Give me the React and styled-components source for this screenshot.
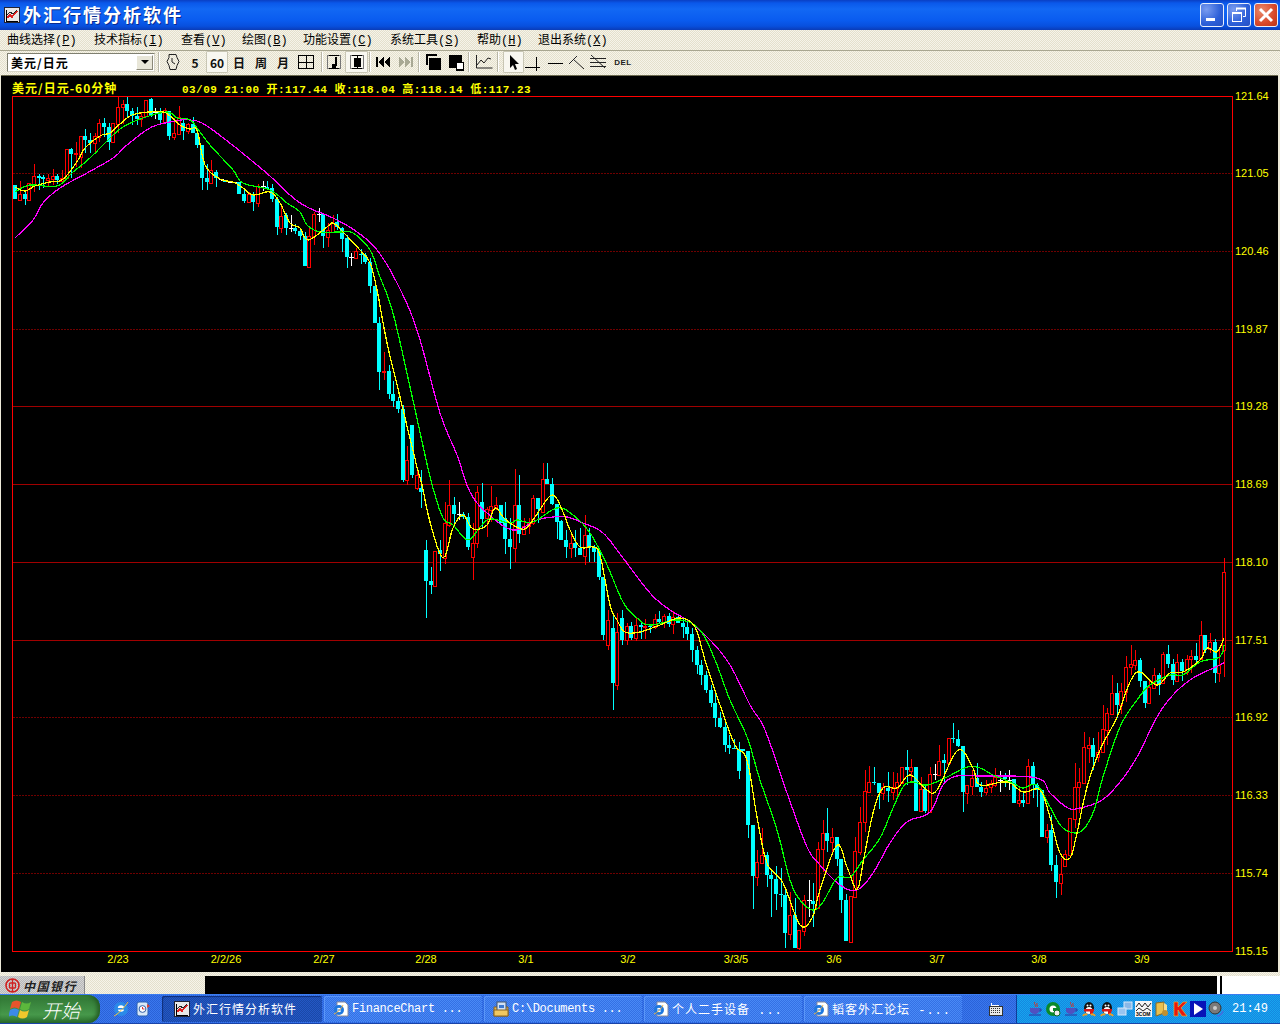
import React from 'react';
import styled, { createGlobalStyle } from 'styled-components';

const Global = createGlobalStyle`
  html, body { margin: 0; padding: 0; background: #ece9d8; overflow: hidden; }
  * { box-sizing: border-box; }
`;

const FONT = '"Liberation Mono", "Noto Sans CJK SC", monospace';
const dither = 'repeating-conic-gradient(#e4e0cc 0 25%, #f6f4ea 0 50%) 0 0 / 2px 2px';

const Page = styled.div`
  width: 1280px; height: 1024px; display: flex; flex-direction: column; font-family: ${FONT};
`;
const TitleBar = styled.header`
  height: 30px; display: flex; align-items: center; padding: 0 2px 0 4px; color: #fff;
  background: linear-gradient(#0a3fc4 0, #0a58ea 3px, #1268f4 9px, #0a5cf0 20px, #0850de 26px, #0a3cb8 30px);
`;
const TitleText = styled.h1`
  flex: 1; margin: 0 0 3px 3px; font: bold 18px "Noto Sans CJK SC", sans-serif; letter-spacing: 2px;
  text-shadow: 1px 1px 0 #0a2a90;
`;
const WinButton = styled.button`
  width: 24px; height: 24px; margin-left: 3px; padding: 0; display: flex; align-items: center; justify-content: center;
  border: 1px solid #e8eefc; border-radius: 3px;
  background: ${p => p.$close ? 'radial-gradient(circle at 30% 30%, #e88a6c, #d8482a 60%, #b83418)' : 'radial-gradient(circle at 25% 25%, #7a9cf0, #2c5fd8 60%, #2450c4)'};
`;
const MenuBar = styled.nav`
  height: 21px; display: flex; align-items: center; padding: 0 0 3px 7px; background: ${dither};
  border-bottom: 1px solid #a8a690; font-size: 12px; color: #000;
`;
const MenuItem = styled.span`
  width: ${p => p.$w}px; white-space: nowrap;
  u { text-decoration: underline; }
`;
const ToolBar = styled.div`
  height: 24px; display: flex; align-items: center; padding: 0 0 2px 7px; background: ${dither};
`;
const Select = styled.div`
  width: 148px; height: 19px; display: flex; align-items: center; justify-content: space-between; padding: 0 1px 0 3px;
  background: #fff; border: 1px solid #7f7f70; border-right-color: #d8d6c8; border-bottom-color: #d8d6c8;
  font: bold 12px "Noto Sans CJK SC", sans-serif; letter-spacing: 1px; color: #000;
`;
const SelectArrow = styled.span`
  width: 17px; height: 15px; display: flex; align-items: center; justify-content: center;
  background: #e8e6d8; border: 1px solid #8a8878; border-top-color: #fff; border-left-color: #fff;
  &::after { content: ""; border: 4px solid transparent; border-top: 4px solid #000; border-bottom: 0; }
`;
const ToolSep = styled.span`
  width: 2px; height: 20px; margin: ${p => p.$m || '0 4px'}; background: #b8b6a6; border-right: 1px solid #fff;
`;
const ToolBtn = styled.span`
  width: ${p => p.$w || 22}px; height: 22px; display: flex; align-items: center; justify-content: center;
  font: bold 12px "Noto Sans CJK SC", "Liberation Sans", sans-serif; color: #111;
  ${p => p.$pressed ? 'background: #f8f7f0; border: 1px solid #c8c6b4; border-radius: 1px;' : ''}
`;
const DelLabel = styled.span`
  font: bold 8px "Liberation Sans", sans-serif; letter-spacing: .5px; color: #222;
`;
const ChartPanel = styled.main`
  flex: 1; margin: 0 2px 0 1px; background: #000; border-top: 1px solid #6c6a50; display: flex; flex-direction: column; min-height: 0;
`;
const ChartHead = styled.div`
  height: 20px; display: flex; align-items: center; padding: 3px 0 0 11px; color: #ffff00; font-weight: bold; white-space: nowrap;
`;
const HeadTitle = styled.span`
  width: 170px; font-size: 12px; letter-spacing: 1px; font-family: "Noto Sans CJK SC", sans-serif;
`;
const HeadInfo = styled.span`
  font-size: 11px; letter-spacing: 0.45px;
`;
const ChartSvg = styled.svg`
  display: block; flex: none; overflow: visible;
  text { font-family: "Liberation Sans", sans-serif; font-size: 11px; fill: #ffff00; }
`;
const StatusStrip = styled.div`
  height: 22px; padding-top: 4px; display: flex; background: ${dither};
`;
const BankLogo = styled.div`
  width: 85px; display: flex; align-items: center; gap: 3px; padding-left: 5px;
  background: repeating-conic-gradient(#b8b8b8 0 25%, #d4d4d4 0 50%) 0 0 / 2px 2px;
  border-right: 1px solid #888;
`;
const BankName = styled.span`
  font: italic bold 12px "Noto Sans CJK TC", sans-serif; color: #222; letter-spacing: 1.5px; white-space: nowrap;
`;
const BlankField = styled.div`
  width: 120px; background: ${dither};
`;
const BlackField = styled.div`
  flex: 1; background: #000;
`;
const CaretField = styled.div`
  width: 63px; background: #fff; padding-left: 3px;
  &::before { content: ""; display: block; width: 2px; height: 100%; background: #000; }
`;
const TaskBar = styled.footer`
  height: 30px; display: flex; align-items: stretch; color: #fff;
  background: repeating-conic-gradient(#2a62d8 0 25%, #3a78ee 0 50%) 0 0 / 2px 2px;
  border-top: 1px solid #3a7cf0; border-bottom: 1px solid #1a44a8;
`;
const StartButton = styled.div`
  width: 100px; display: flex; align-items: center; gap: 8px; padding-left: 9px;
  background: linear-gradient(#388c40, #347c38 15%, #46984a 70%, #2a6e2c);
  border-radius: 0 12px 12px 0; box-shadow: inset -3px 0 4px #245c24;
`;
const StartText = styled.span`
  font: italic 300 19px "Noto Sans CJK SC", sans-serif; line-height: 1; color: #fff; letter-spacing: 0;
`;
const QuickLaunch = styled.div`
  width: 62px; display: flex; align-items: center; gap: 6px; padding-left: 13px;
`;
const TaskList = styled.div`
  flex: 1; display: flex; gap: 2px; align-items: stretch; padding: 1px 0;
`;
const TaskButton = styled.div`
  width: ${p => p.$active ? 160 : 158}px; display: flex; align-items: center; gap: 3px; padding-left: ${p => p.$active ? 12 : 9}px;
  font-size: 12px; letter-spacing: ${p => p.$wide ? '1px' : '-.3px'}; white-space: nowrap; border-radius: 2px;
  background: ${p => p.$active ? 'repeating-conic-gradient(#1a48a8 0 25%, #2458c4 0 50%) 0 0 / 2px 2px' : 'repeating-conic-gradient(#3470e4 0 25%, #4a8af6 0 50%) 0 0 / 2px 2px'};
  box-shadow: ${p => p.$active ? 'inset 1px 1px 1px #102f78' : 'inset 1px 1px 0 #5a96f8'};
`;
const LangBar = styled.div`
  width: 54px; display: flex; align-items: center; justify-content: flex-end; padding-right: 13px;
`;
const Tray = styled.div`
  width: 264px; display: flex; align-items: center; gap: 2px; padding-left: 10px;
  background: repeating-conic-gradient(#1488e0 0 25%, #18a4ee 0 50%) 0 0 / 2px 2px;
  border-left: 1px solid #0e3c98;
`;
const Clock = styled.span`
  margin-left: 6px; font-size: 12px;
`;

const Minimize = () => <svg width="20" height="20" viewBox="0 0 20 20"><rect x="4" y="13" width="9" height="3" fill="#fff" /></svg>;
const Restore = () => <svg width="20" height="20" viewBox="0 0 20 20" fill="none" stroke="#fff"><path d="M7.5 6V3.5h9v8H14" strokeWidth="1" /><path d="M7 3.5h10" strokeWidth="2" /><rect x="3.5" y="7.5" width="9" height="9" /><path d="M3 8h10" strokeWidth="2" /></svg>;
const CloseX = () => <svg width="20" height="20" viewBox="0 0 20 20" stroke="#fff" strokeWidth="3"><path d="M4 4l12 12M16 4L4 16" /></svg>;

const AppIcon = ({ s = 16 }) => <svg width={s} height={s} viewBox="0 0 16 16" shapeRendering="crispEdges"><rect x=".5" y=".5" width="15" height="15" fill="#e8e8e8" stroke="#223" /><path d="M2 3v11M2 14h12" stroke="#000" fill="none" /><path d="M3 11l3-3 2 2 5-6" stroke="#e02020" strokeWidth="1.5" fill="none" /><path d="M3 8l3-3 3 2 4-4" stroke="#222" fill="none" /></svg>;
const IeDoc = () => <svg width="16" height="16" viewBox="0 0 16 16"><path d="M4 1h8l3 3v11H4z" fill="#fff" stroke="#889" /><circle cx="6" cy="9" r="5" fill="#1e78e0" /><circle cx="6" cy="9" r="2.2" fill="#fff" /><path d="M3 9h6" stroke="#1e78e0" /><path d="M1 13c3-1 8-6 9-9" stroke="#f0b040" fill="none" /></svg>;
const FolderDoc = () => <svg width="16" height="16" viewBox="0 0 16 16"><path d="M1 6h14v9H1z" fill="#e8b84c" stroke="#8a6420" /><rect x="4" y="1" width="9" height="9" fill="#cfe0f4" stroke="#456" /><rect x="6" y="4" width="5" height="3" fill="#3a78d0" /><path d="M1 9h14v6H1z" fill="#f0c860" stroke="#8a6420" /></svg>;
const IeIcon = () => <svg width="16" height="16" viewBox="0 0 16 16"><circle cx="8" cy="8" r="7" fill="#2a8ae8" /><circle cx="8" cy="7.5" r="3.2" fill="#fff" /><rect x="4" y="7" width="8" height="1.6" fill="#2a8ae8" /><path d="M12 8.6h3L12 12z" fill="#2a8ae8" /><path d="M1 15C4 14 12 6 15 1" stroke="#f0c040" fill="none" /></svg>;
const DesktopIcon = () => <svg width="16" height="16" viewBox="0 0 16 16"><rect x="2" y="1" width="11" height="14" rx="2" fill="#d8e8f8" stroke="#2a60b0" /><circle cx="7.5" cy="8" r="3.4" fill="#fff" stroke="#3060a8" /><path d="M7.5 6v2h2" stroke="#e03030" fill="none" /><path d="M12 3l3 2-3 2z" fill="#e04030" /></svg>;
const Flag = () => <svg width="25" height="22" viewBox="0 0 25 22"><path d="M3 4c3-2 6-2 9 0l-2 7c-3-2-6-2-9 0z" fill="#e8542c" /><path d="M13 4c3 2 6 2 9 0l-2 7c-3 2-6 2-9 0z" fill="#5cb83c" /><path d="M1 12c3-2 6-2 9 0l-2 7c-3-2-6-2-9 0z" fill="#3c8ae8" /><path d="M11 12c3 2 6 2 9 0l-2 7c-3 2-6 2-9 0z" fill="#f0c82c" /></svg>;
const BocLogo = () => <svg width="15" height="15" viewBox="0 0 15 15" fill="none" stroke="#d02020"><circle cx="7.5" cy="7.5" r="6.5" strokeWidth="1.6" /><rect x="4.5" y="5" width="6" height="5" rx="1" strokeWidth="1.4" /><path d="M7.5 1v13" strokeWidth="1.4" /></svg>;

const Tb = ({ children }) => <svg width="18" height="18" viewBox="0 0 18 18" fill="none" stroke="#000" shapeRendering="crispEdges">{children}</svg>;
const WatchIcon = () => <svg width="18" height="18" viewBox="0 0 18 18" fill="none" stroke="#222"><path d="M5 1.5h7l1 3 2 4-2 4-1 4H6l-1-4-2-4 2-4z" /><path d="M8 5v4l3 2" /></svg>;
const GridIcon = () => <Tb><rect x="1.5" y="2.5" width="15" height="13" /><path d="M9.5 2v14M1 9.5h16" /></Tb>;
const NoteIcon = () => <Tb><rect x="2.5" y="2.5" width="13" height="13" stroke="#777" /><path d="M4 2.5h10M4 15.5h10" stroke="#000" /><path d="M10.5 4v9" strokeWidth="2" /><rect x="7" y="11" width="3" height="3" fill="#000" /></Tb>;
const CandleIcon = () => <Tb><rect x="2.5" y="2.5" width="13" height="13" stroke="#777" /><path d="M4 2.5h10M4 15.5h10" /><rect x="6" y="5" width="6" height="8" fill="#000" /><path d="M9 3v12" /></Tb>;
const BackIcon = ({ c = '#000' }) => <svg width="18" height="18" viewBox="0 0 18 18" fill={c} shapeRendering="crispEdges"><rect x="2" y="4" width="2" height="10" /><path d="M10 4v10L4 9zM16 4v10l-6-5z" /></svg>;
const ForwardIcon = () => <svg width="18" height="18" viewBox="0 0 18 18" fill="#a8a894" shapeRendering="crispEdges"><rect x="14" y="4" width="2" height="10" /><path d="M2 4v10l6-5zM8 4v10l6-5z" /></svg>;
const FrontIcon = () => <Tb><path d="M2.5 11.5V1.5h10" strokeWidth="2" /><rect x="5" y="5" width="11" height="11" fill="#000" /></Tb>;
const BackPlate = () => <Tb><rect x="2" y="2" width="12" height="12" fill="#000" /><rect x="9" y="9" width="7" height="7" fill="#fff" /><path d="M16.5 9v8H9" strokeWidth="1" /></Tb>;
const LineChart = () => <svg width="18" height="18" viewBox="0 0 18 18" fill="none" stroke="#222"><path d="M1.5 2v13h16" /><path d="M2 12l4-5 3 3 4-5 3 1" /></svg>;
const Cursor = () => <svg width="14" height="16" viewBox="0 0 14 16" fill="#000"><path d="M3 1v13l3-3 2 5 2-1-2-5h4z" /></svg>;
const CrossLine = () => <Tb><path d="M0 14.5h15M11.5 4v15" /></Tb>;
const HLine = () => <Tb><path d="M2 10.5h15" /></Tb>;
const Zig = () => <svg width="18" height="18" viewBox="0 0 18 18" fill="none" stroke="#222"><path d="M1 11l8-8M5 6l11 10" /></svg>;
const Multi = () => <svg width="18" height="18" viewBox="0 0 18 18" fill="none" stroke="#222"><path d="M1 5.5h16M1 9.5h16M1 13.5h16" /><path d="M2 2l14 13" /></svg>;

const Keyboard = () => <svg width="15" height="13" viewBox="0 0 15 13" shapeRendering="crispEdges"><path d="M3 0v2h8" stroke="#fff" fill="none" /><rect x="1" y="3" width="13" height="9" fill="#e8e8e8" stroke="#333" /><path d="M3 5h9M3 7h9M3 9h9" stroke="#333" strokeDasharray="1 1" /></svg>;
const Java = () => <svg width="16" height="16" viewBox="0 0 16 16"><path d="M8 1c-2 2 2 3 0 5M10 2c-1 2 1 2 0 4" stroke="#d83020" fill="none" /><path d="M3 7h9v3c0 2-2 3-4 3s-5-1-5-3z" fill="#5050c0" /><path d="M12 8h2v2h-2M2 14h12" stroke="#3030a0" fill="none" /></svg>;
const GIcon = () => <svg width="16" height="16" viewBox="0 0 16 16"><circle cx="8" cy="8" r="7" fill="#0a8a2a" /><circle cx="8" cy="8" r="3.5" fill="#fff" /><rect x="8" y="7" width="7" height="3" fill="#0a8a2a" /><circle cx="12" cy="12" r="3" fill="#eee" stroke="#0a6a20" /></svg>;
const Penguin = () => <svg width="16" height="16" viewBox="0 0 16 16"><ellipse cx="8" cy="7" rx="5" ry="6" fill="#111" /><ellipse cx="8" cy="9.5" rx="3.5" ry="3.5" fill="#fff" /><circle cx="6.5" cy="4.5" r="1" fill="#fff" /><circle cx="9.5" cy="4.5" r="1" fill="#fff" /><rect x="3" y="8" width="10" height="2.5" fill="#d81818" /><path d="M9 10h3v3H9z" fill="#d81818" /><path d="M2 15c1-2 3-2 4-1M14 15c-1-2-3-2-4-1" stroke="#f0a020" strokeWidth="2" fill="none" /></svg>;
const Network = () => <svg width="16" height="16" viewBox="0 0 16 16"><rect x="7" y="1" width="8" height="7" fill="#88b8e8" stroke="#d8e8f8" /><rect x="1" y="7" width="8" height="7" fill="#98c4f0" stroke="#d8e8f8" /></svg>;
const ThreeCom = () => <svg width="17" height="16" viewBox="0 0 17 16"><rect width="17" height="16" fill="#f4f4f4" /><path d="M1 6l3-4 3 4 3-4 3 4 3-4M1 10l3-3 4 3 4-3 4 3" stroke="#222" fill="none" /><text x="1" y="15" fontSize="5" fontFamily="Liberation Sans" fontWeight="bold" fill="#000">3COM</text></svg>;
const FolderLock = () => <svg width="16" height="16" viewBox="0 0 16 16"><path d="M2 2l8-1v11l-8 3z" fill="#e8c050" stroke="#8a6a20" /><path d="M10 2l3 2v8l-3 0z" fill="#f4dc90" /><circle cx="11" cy="12" r="3" fill="#c09030" /></svg>;
const KIcon = () => <svg width="16" height="16" viewBox="0 0 16 16"><path d="M2 1h4v5l5-5h4l-6 6 6 8h-5L6 9v6H2z" fill="#e81810" stroke="#f8c020" strokeWidth=".6" /></svg>;
const PlayBlue = () => <svg width="16" height="16" viewBox="0 0 16 16"><rect width="16" height="16" fill="#0814b8" /><path d="M4 2l9 6-9 6z" fill="#fff" /></svg>;
const Speaker = () => <svg width="16" height="16" viewBox="0 0 16 16"><circle cx="7" cy="7" r="6" fill="#7a7a7a" stroke="#333" /><circle cx="7" cy="7" r="2" fill="#ccc" /><path d="M9 15c3 0 5-2 6-5" stroke="#4a6ae0" fill="none" strokeWidth="1.4" /></svg>;

/* ---------- chart data, in page pixels ---------- */
const YELLOW = [[15,187],[25,191],[35,186],[50,182],[60,181],[68,174],[78,160],[85,148],[100,136],[110,133],[120,124],[130,116],[140,113],[150,112],[163,112],[170,116],[180,125],[190,129],[197,130],[205,165],[220,179],[233,182],[243,188],[253,195],[270,192],[280,203],[290,223],[300,228],[308,240],[327,227],[333,223],[343,232],[360,250],[370,263],[377,290],[387,343],[400,397],[417,467],[422,485],[430,522],[443,558],[453,528],[463,515],[473,529],[487,525],[495,508],[503,517],[513,525],[525,529],[535,517],[552,495],[563,512],[570,530],[580,547],[593,547],[600,555],[610,605],[617,620],[625,632],[640,632],[660,625],[680,618],[695,627],[705,660],[720,705],[735,745],[747,760],[757,817],[767,863],[783,883],[800,925],[812,918],[820,890],[837,845],[847,867],[857,890],[863,863],[873,813],[883,788],[897,788],[910,775],[927,790],[937,790],[958,750],[973,768],[980,785],[1007,782],[1023,792],[1040,790],[1050,817],[1060,853],[1070,858],[1077,833],[1087,787],[1100,750],[1117,717],[1130,682],[1140,672],[1157,685],[1170,673],[1183,672],[1200,660],[1207,648],[1217,652],[1224,638]];
const GREEN = [[15,192],[30,185],[57,186],[73,172],[90,158],[110,138],[123,127],[143,118],[167,112],[177,118],[190,120],[200,132],[210,145],[233,170],[243,183],[270,190],[287,203],[300,212],[307,225],[320,232],[340,232],[353,233],[370,250],[380,277],[393,313],[410,387],[425,455],[433,488],[443,518],[453,525],[468,540],[480,527],[490,519],[510,523],[517,520],[533,522],[557,508],[573,515],[590,533],[607,565],[623,602],[637,618],[650,625],[680,620],[700,630],[715,660],[730,700],[747,737],[760,780],[777,830],[790,880],[800,900],[813,910],[823,902],[837,878],[850,877],[863,860],[880,838],[893,808],[903,787],[912,782],[927,785],[947,777],[967,767],[980,768],[993,775],[1013,783],[1023,788],[1037,785],[1050,807],[1063,828],[1080,832],[1093,813],[1103,777],[1120,727],[1137,700],[1150,685],[1170,675],[1183,675],[1200,662],[1220,657],[1224,645]];
const MAGENTA = [[15,238],[33,220],[43,203],[60,188],[87,173],[113,158],[127,145],[150,128],[170,122],[190,120],[210,128],[263,170],[290,195],[307,207],[333,218],[357,232],[377,250],[397,283],[417,330],[440,413],[457,455],[470,492],[487,513],[513,530],[537,520],[553,517],[567,517],[583,523],[603,533],[623,558],[650,593],[670,610],[690,622],[710,640],[730,665],[750,705],[765,730],[787,793],[807,847],[820,865],[840,885],[857,890],[873,873],[890,843],[907,822],[930,812],[943,785],[957,776],[980,776],[1037,778],[1050,793],[1068,808],[1080,808],[1102,800],[1120,782],[1137,757],[1157,717],[1173,695],[1193,678],[1220,665],[1224,662]];

// x, body top, body bottom, wick high, wick low, colour
const KNOWN = [
[15,185,199,185,199,'c'],[20,194,200,181,200,'r'],[25,194,199,190,205,'c'],[30,183,200,183,200,'r'],[34,176,184,164,192,'r'],[39,176,178,174,190,'c'],[44,177,179,175,188,'c'],[48,178,180,174,187,'r'],[53,176,179,169,185,'r'],[58,176,180,174,184,'c'],[62,178,181,170,183,'r'],[67,149,178,149,178,'r'],[72,149,154,148,178,'c'],[76,153,154,142,167,'r'],[81,136,157,136,168,'r'],[86,136,140,129,153,'c'],[90,140,143,133,153,'c'],[95,136,143,133,152,'r'],[100,123,137,119,142,'r'],[104,123,127,118,137,'c'],[109,127,142,123,150,'c'],[114,123,142,123,143,'r'],[118,107,124,97,133,'r'],[123,104,107,100,124,'r'],[128,104,111,97,117,'c'],[132,111,116,108,125,'c'],[137,116,119,107,125,'c'],[142,116,119,113,127,'r'],[146,100,116,100,116,'r'],[151,99,116,98,117,'c'],[156,112,113,108,119,'w'],[160,112,120,108,123,'c'],[165,110,122,108,123,'r'],[170,111,136,111,140,'c'],[174,133,137,118,140,'r'],[179,117,134,106,134,'r'],[184,123,131,118,140,'c'],[188,124,131,123,134,'r'],[193,124,133,117,133,'c'],[198,133,145,128,148,'c'],[202,145,178,145,190,'c'],[207,178,182,164,190,'c'],[211,170,183,160,183,'r'],[216,172,178,170,187,'c'],[221,179,180,179,181,'w'],[225,180,182,180,182,'c'],[230,182,183,182,183,'w'],[235,182,183,182,183,'w'],[239,182,194,182,194,'c'],[244,194,201,188,203,'c'],[249,194,202,192,203,'r'],[253,194,202,192,211,'c'],[258,186,203,184,207,'r'],[263,186,187,181,191,'w'],[267,187,189,181,190,'c'],[272,188,199,184,202,'c'],[277,199,227,197,235,'c'],[281,216,228,207,233,'r'],[286,215,228,213,235,'c'],[291,228,229,215,232,'w'],[295,228,231,224,234,'c'],[300,231,236,228,240,'c'],[305,236,266,232,266,'c'],[309,236,267,227,267,'r'],[314,214,236,212,245,'r'],[319,214,215,208,222,'w'],[323,214,236,213,248,'c'],[328,230,237,223,247,'r'],[333,223,232,215,233,'r'],[337,222,227,214,230,'c'],[342,228,239,227,252,'c'],[347,238,257,235,268,'c'],[351,257,258,253,266,'w'],[356,251,258,248,258,'r'],[361,254,255,249,264,'c'],[365,255,262,253,264,'c'],[370,262,286,258,293,'c'],[375,286,323,286,323,'c'],[379,323,372,317,390,'c'],[384,371,372,352,380,'r'],[389,371,394,365,399,'c'],[393,394,401,381,407,'c'],[398,401,409,397,413,'c'],[403,409,480,405,482,'c'],[407,460,480,446,485,'r'],[412,425,475,425,478,'c'],[416,475,488,470,490,'r'],[421,488,492,470,508,'c'],
[426,550,581,540,618,'c'],[431,581,585,567,594,'c'],[435,551,586,551,586,'r'],[440,550,554,540,571,'c'],[445,523,558,502,564,'r'],[449,505,525,480,527,'r'],[454,505,514,497,527,'c'],[459,514,515,502,520,'w'],[463,514,517,512,519,'c'],[468,517,547,513,550,'c'],[473,543,557,523,580,'r'],[477,492,543,486,548,'r'],[482,502,519,483,527,'c'],[487,509,518,507,537,'r'],[491,506,510,486,522,'r'],[496,505,507,497,510,'r'],[501,505,523,505,523,'c'],[505,518,539,502,554,'c'],[510,539,547,518,569,'c'],[515,505,548,469,562,'r'],[519,505,534,475,543,'c'],[524,526,534,518,535,'r'],[529,523,526,518,534,'r'],[533,498,523,495,525,'r'],[538,498,509,498,523,'c'],[543,479,512,463,512,'r'],[547,479,484,463,484,'c'],[552,484,504,478,505,'c'],[557,504,522,505,539,'c'],[561,521,540,520,540,'c'],[566,540,547,530,558,'c'],[571,543,548,532,558,'r'],[575,543,548,530,557,'c'],[580,548,555,528,555,'c'],[585,535,556,515,565,'r'],[589,535,548,528,562,'c'],[594,548,552,545,562,'c'],[599,550,577,548,580,'c'],[603,577,635,577,640,'c'],[608,620,645,610,650,'r'],[612,628,683,615,710,'c'],[617,632,685,613,690,'r'],[622,618,640,610,645,'c'],
[743,749,751,749,751,'c'],[748,751,825,751,838,'c'],[753,825,876,825,909,'c'],[758,862,877,850,886,'r'],[762,855,863,828,863,'r'],[767,855,875,852,887,'c'],[772,875,879,870,917,'c'],[776,879,894,866,910,'c'],[781,894,895,868,907,'c'],[786,895,933,890,948,'c'],[790,915,934,892,940,'r'],[795,915,948,898,948,'c'],[800,930,948,930,950,'r'],[804,900,931,895,936,'r'],[809,900,901,880,917,'w'],[814,901,904,883,927,'c'],[818,849,908,842,908,'r'],[823,833,849,820,872,'r'],[828,833,841,808,852,'c'],[832,837,842,828,852,'r'],[837,837,859,837,866,'c'],[842,859,900,859,913,'c'],[846,900,941,894,941,'c'],[851,896,942,896,942,'r'],[856,851,897,837,897,'r'],[860,822,852,807,855,'r'],[865,791,822,770,832,'r'],[870,782,792,766,792,'r'],[874,782,783,767,785,'c'],[879,783,793,783,809,'c'],[884,787,793,783,800,'r'],[888,788,791,772,802,'c'],[893,787,792,772,800,'r'],[898,782,788,773,797,'r'],[902,767,783,767,783,'r'],[907,767,770,750,785,'c'],[912,767,771,759,783,'r'],[916,767,811,767,811,'c'],[921,789,811,777,812,'r'],[926,789,811,785,813,'c'],[930,774,812,767,812,'r'],[935,774,775,764,780,'w'],[940,761,775,745,775,'r'],[944,760,763,754,782,'c'],[949,738,763,738,763,'r'],[954,738,739,723,743,'c'],[958,739,746,730,747,'c'],[963,746,792,746,812,'c'],[968,785,793,785,804,'r'],[972,778,786,770,795,'r'],[977,778,787,763,787,'c'],
[982,787,792,782,797,'c'],[986,788,792,780,795,'r'],[991,783,787,780,793,'r'],[996,777,785,768,787,'r'],[1000,780,781,771,792,'w'],[1005,777,779,773,787,'c'],[1010,780,781,770,790,'w'],[1014,779,803,779,803,'c'],[1019,800,803,788,807,'r'],[1024,800,803,792,807,'c'],[1028,766,803,759,803,'r'],[1033,766,785,762,798,'c'],[1038,785,790,783,807,'c'],[1042,790,837,790,837,'c'],[1047,830,837,824,843,'r'],[1052,830,865,815,871,'c'],[1056,865,882,855,898,'c'],[1061,874,883,858,895,'r'],[1066,854,866,850,867,'r'],[1070,818,855,818,855,'r'],[1075,787,819,763,828,'r'],[1080,782,787,768,813,'r'],[1084,747,783,732,783,'r'],[1089,745,748,737,763,'r'],[1094,745,757,738,770,'c'],[1098,752,757,732,762,'r'],[1103,729,752,705,752,'r'],[1108,713,730,708,745,'r'],[1112,693,714,675,714,'r'],[1117,693,705,683,718,'c'],[1122,691,705,683,714,'r'],[1126,667,692,656,702,'r'],[1131,664,667,645,675,'r'],[1136,660,665,650,670,'r'],[1140,660,681,658,687,'c'],[1145,681,703,681,708,'c'],[1150,687,703,680,703,'r'],[1154,675,688,668,688,'r'],[1159,675,685,673,695,'c'],[1164,654,683,652,684,'r'],[1168,654,664,645,668,'c'],[1173,664,680,659,685,'c'],[1178,662,681,654,682,'r'],[1182,662,671,659,681,'c'],[1187,659,672,655,675,'r'],[1192,656,659,650,673,'r'],[1196,656,660,643,663,'c'],[1201,635,659,621,660,'r'],[1206,635,650,635,653,'c'],[1210,642,649,633,653,'r'],[1215,642,673,639,683,'c'],[1220,665,673,650,682,'r'],[1224,572,650,558,677,'r'],
];

const STEP = 4.667, X0 = 15.3, COUNT = 260;
const lerp = (pts, x) => {
  if (x <= pts[0][0]) return pts[0][1];
  for (let i = 1; i < pts.length; i++) {
    if (x <= pts[i][0]) {
      const [a, b] = pts[i - 1], [c, d] = pts[i];
      return b + (d - b) * (x - a) / (c - a);
    }
  }
  return pts[pts.length - 1][1];
};
const smooth = pts => {
  const out = [];
  for (let i = 0; i < pts.length - 1; i++) {
    const p0 = pts[Math.max(0, i - 1)], p1 = pts[i], p2 = pts[i + 1], p3 = pts[Math.min(pts.length - 1, i + 2)];
    const n = Math.max(2, Math.round((p2[0] - p1[0]) / 2));
    for (let k = 0; k < n; k++) {
      const t = k / n, t2 = t * t, t3 = t2 * t;
      const f = j => 0.5 * (2 * p1[j] + (p2[j] - p0[j]) * t + (2 * p0[j] - 5 * p1[j] + 4 * p2[j] - p3[j]) * t2 + (3 * p1[j] - p0[j] - 3 * p2[j] + p3[j]) * t3);
      out.push(`${f(0).toFixed(1)},${f(1).toFixed(1)}`);
    }
  }
  const l = pts[pts.length - 1];
  out.push(`${l[0]},${l[1]}`);
  return out.join(' ');
};
const buildCandles = () => {
  const map = {};
  KNOWN.forEach(k => { map[Math.round((k[0] - X0) / STEP)] = k; });
  let seed = 1234;
  const rnd = () => { seed = (seed * 16807) % 2147483647; return seed / 2147483647; };
  const list = [];
  let prev = 620;
  for (let i = 0; i < COUNT; i++) {
    const x = Math.round(X0 + STEP * i);
    if (map[i]) {
      list.push({ x, t: map[i][1], b: map[i][2], h: map[i][3], l: map[i][4], c: map[i][5] });
      prev = map[i][2];
      continue;
    }
    const close = lerp(YELLOW, x + 9) + (rnd() - .5) * 12;
    const t = Math.round(Math.min(prev, close)), b = Math.round(Math.max(prev, close));
    list.push({ x, t, b, h: Math.round(t - rnd() * 10), l: Math.round(b + rnd() * 12), c: close < prev ? 'r' : 'c' });
    prev = close;
  }
  return list;
};
const CANDLES = buildCandles();
const PRICES = ['121.64','121.05','120.46','119.87','119.28','118.69','118.10','117.51','116.92','116.33','115.74','115.15'];
const GRID_Y = [96,173,251,329,406,484,562,640,717,795,873,951];
const DATES = [['2/23',118],['2/2/26',226],['2/27',324],['2/28',426],['3/1',526],['3/2',628],['3/3/5',736],['3/6',834],['3/7',937],['3/8',1039],['3/9',1142]];
const COLORS = { r: '#ff0000', c: '#00ffff', w: '#ffffff' };

const Candle = ({ d }) => {
  const col = COLORS[d.c];
  const h = Math.max(1, d.b - d.t);
  return (
    <g>
      <rect x={d.x} y={d.h} width="1" height={Math.max(1, d.l - d.h)} fill={col} />
      {d.c === 'r' && <rect x={d.x - 1.5} y={d.t + .5} width="3" height={h} fill="#000" stroke={col} />}
      {d.c === 'c' && <rect x={d.x - 2} y={d.t} width="4" height={h} fill={col} />}
      {d.c === 'w' && <rect x={d.x - 2} y={d.t} width="5" height="1" fill={col} />}
    </g>
  );
};

const Chart = () => (
  <ChartSvg width="1277" height="876" viewBox="1 96 1277 876" shapeRendering="crispEdges">
    {GRID_Y.slice(1, -1).map((y, i) => (
      <path key={y} d={`M13 ${y + .5}H1232`} stroke={i >= 3 && i <= 6 ? '#a00000' : '#6e0000'} strokeDasharray={i >= 3 && i <= 6 ? undefined : '2 1'} />
    ))}
    {CANDLES.map(d => <Candle key={d.x} d={d} />)}
    <polyline points={smooth(MAGENTA)} fill="none" stroke="#ff00ff" strokeWidth="1.25" />
    <polyline points={smooth(GREEN)} fill="none" stroke="#00ff00" strokeWidth="1.25" />
    <polyline points={smooth(YELLOW)} fill="none" stroke="#ffff00" strokeWidth="1.25" />
    <rect x="12.5" y="96.5" width="1220" height="855" fill="none" stroke="#ff0000" />
    {GRID_Y.map((y, i) => <text key={y} x="1235" y={y + 4}>{PRICES[i]}</text>)}
    {DATES.map(([t, x]) => <text key={t} x={x} y="963" textAnchor="middle">{t}</text>)}
  </ChartSvg>
);

const MENU = [['曲线选择','P'],['技术指标','I'],['查看','V'],['绘图','B'],['功能设置','C'],['系统工具','S'],['帮助','H'],['退出系统','X']];
const TASKS = [
  { icon: <IeDoc />, text: 'FinanceChart ...' },
  { icon: <FolderDoc />, text: 'C:\\Documents ...' },
  { icon: <IeDoc />, text: '个人二手设备 ...', wide: true },
  { icon: <IeDoc />, text: '韬客外汇论坛 -...', wide: true },
];

export default function App() {
  return (
    <Page>
      <Global />
      <TitleBar>
        <AppIcon />
        <TitleText>外汇行情分析软件</TitleText>
        <WinButton aria-label="minimize"><Minimize /></WinButton>
        <WinButton aria-label="restore"><Restore /></WinButton>
        <WinButton aria-label="close" $close><CloseX /></WinButton>
      </TitleBar>
      <MenuBar>
        {MENU.map(([name, key]) => <MenuItem key={key} $w={name.length === 4 ? 87 : 61}>{name}(<u>{key}</u>)</MenuItem>)}
      </MenuBar>
      <ToolBar>
        <Select>美元/日元<SelectArrow /></Select>
        <ToolSep $m="0 1px 0 3px" />
        <ToolBtn $w={23}><WatchIcon /></ToolBtn>
        <ToolBtn>5</ToolBtn>
        <ToolBtn $pressed>60</ToolBtn>
        <ToolBtn>日</ToolBtn>
        <ToolBtn>周</ToolBtn>
        <ToolBtn>月</ToolBtn>
        <ToolBtn $w={24}><GridIcon /></ToolBtn>
        <ToolSep $m="0 0 0 3px" />
        <ToolBtn><NoteIcon /></ToolBtn>
        <ToolBtn $w={23} $pressed><CandleIcon /></ToolBtn>
        <ToolSep $m="0 0 0 1px" />
        <ToolBtn $w={23}><BackIcon /></ToolBtn>
        <ToolBtn $w={23}><ForwardIcon /></ToolBtn>
        <ToolSep $m="0 1px 0 1px" />
        <ToolBtn $w={23}><FrontIcon /></ToolBtn>
        <ToolBtn $w={23}><BackPlate /></ToolBtn>
        <ToolSep $m="0 2px 0 1px" />
        <ToolBtn $w={23}><LineChart /></ToolBtn>
        <ToolSep $m="0 4px 0 2px" />
        <ToolBtn $w={21} $pressed><Cursor /></ToolBtn>
        <ToolBtn $w={20}><CrossLine /></ToolBtn>
        <ToolBtn $w={22}><HLine /></ToolBtn>
        <ToolBtn $w={21}><Zig /></ToolBtn>
        <ToolBtn $w={21}><Multi /></ToolBtn>
        <ToolBtn $w={30}><DelLabel>DEL</DelLabel></ToolBtn>
      </ToolBar>
      <ChartPanel>
        <ChartHead>
          <HeadTitle>美元/日元-60分钟</HeadTitle>
          <HeadInfo>03/09 21:00 开:117.44 收:118.04 高:118.14 低:117.23</HeadInfo>
        </ChartHead>
        <Chart />
      </ChartPanel>
      <StatusStrip>
        <BankLogo><BocLogo /><BankName>中国银行</BankName></BankLogo>
        <BlankField />
        <BlackField />
        <CaretField />
      </StatusStrip>
      <TaskBar>
        <StartButton><Flag /><StartText>开始</StartText></StartButton>
        <QuickLaunch><IeIcon /><DesktopIcon /></QuickLaunch>
        <TaskList>
          <TaskButton $active $wide><AppIcon />外汇行情分析软件</TaskButton>
          {TASKS.map(t => <TaskButton key={t.text} $wide={t.wide}>{t.icon}{t.text}</TaskButton>)}
        </TaskList>
        <LangBar><Keyboard /></LangBar>
        <Tray>
          <Java /><GIcon /><Java /><Penguin /><Penguin /><Network /><ThreeCom /><FolderLock /><KIcon /><PlayBlue /><Speaker />
          <Clock>21:49</Clock>
        </Tray>
      </TaskBar>
    </Page>
  );
}
